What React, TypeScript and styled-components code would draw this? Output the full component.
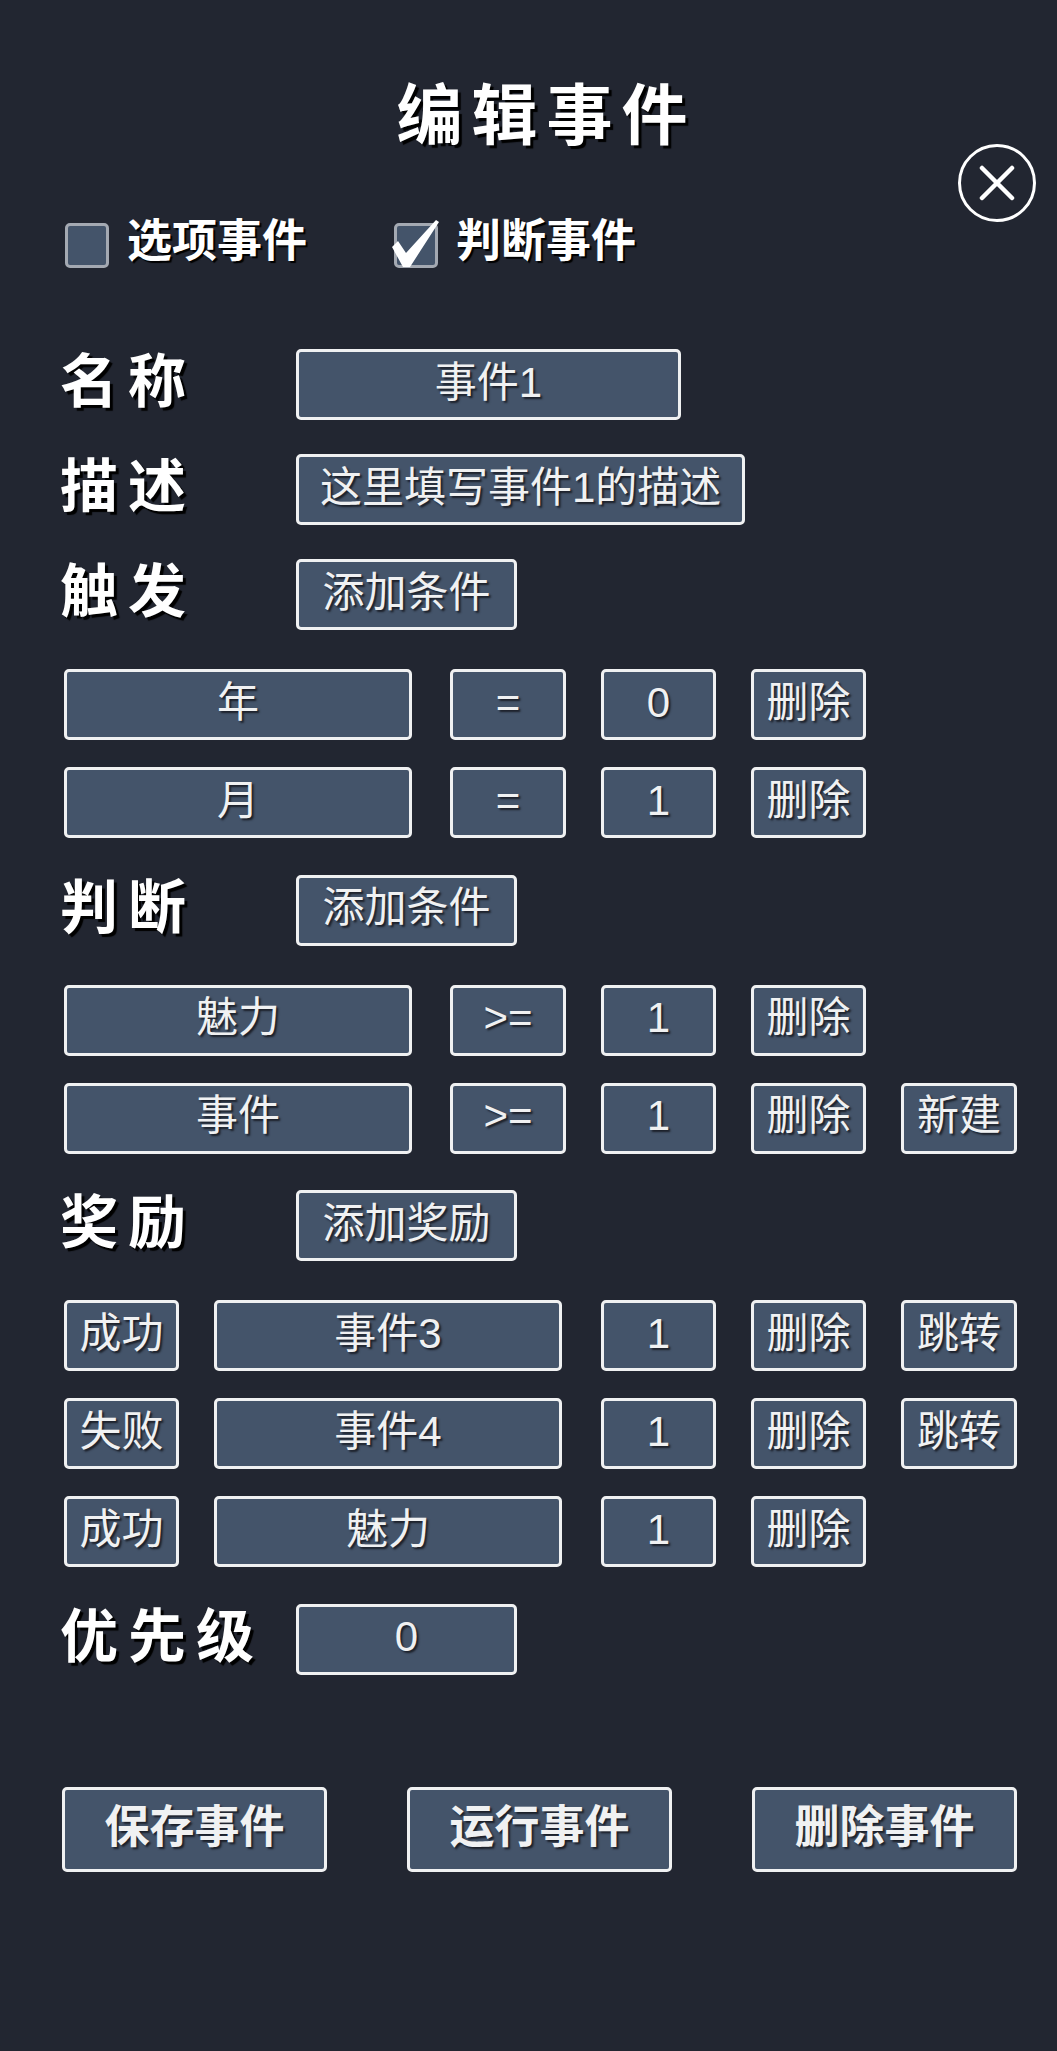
import styled, { createGlobalStyle } from "styled-components";

const GlobalStyle = createGlobalStyle`
  html, body {
    margin: 0;
    padding: 0;
    background: #222631;
  }
  * {
    box-sizing: border-box;
  }
`;

const FONT = `"Liberation Sans", "Noto Sans CJK SC", sans-serif`;

const Page = styled.div`
  width: 1057px;
  height: 2051px;
  padding: 0 21px 0 64px;
  font-family: ${FONT};
  color: #fff;
  overflow: hidden;
`;

const Title = styled.h1`
  width: 1057px;
  height: 144px;
  margin: 0 0 0 -64px;
  padding: 77px 0 0 36px;
  font-size: 66px;
  line-height: 78px;
  font-weight: 700;
  letter-spacing: 9px;
  text-align: center;
  text-shadow: 3px 3px 1px #000;
  white-space: nowrap;
`;

const TopBar = styled.div`
  display: flex;
  align-items: flex-start;
  height: 124px;
`;

const CheckGroup = styled.label<{ $width: number }>`
  align-self: flex-end;
  display: flex;
  align-items: center;
  gap: 18px;
  padding-left: 1px;
  width: ${(p) => p.$width}px;
  font-size: 45px;
  font-weight: 700;
  line-height: 45px;
  text-shadow: 2px 2px 1px #000;
`;

const CheckText = styled.span`
  margin-top: -9px;
`;

const CheckBox = styled.span`
  position: relative;
  flex: none;
  width: 44px;
  height: 45px;
  background: #44546a;
  border: 3px solid #a4a9b2;
  border-radius: 5px;
`;

const CheckMark = styled.svg`
  position: absolute;
  left: -5px;
  top: -6px;
  width: 50px;
  height: 50px;
`;

const CloseButton = styled.button`
  margin-left: auto;
  width: 78px;
  height: 78px;
  padding: 0;
  display: flex;
  align-items: center;
  justify-content: center;
  background: transparent;
  border: 3px solid #fff;
  border-radius: 50%;
`;

const Form = styled.div`
  margin-top: 81px;
  display: flex;
  flex-direction: column;
  gap: 36.5px;
`;

const TopFields = styled.div`
  display: flex;
  flex-direction: column;
  gap: 34px;
`;

const Section = styled.section`
  display: flex;
  flex-direction: column;
  gap: 39px;
`;

const FieldRow = styled.div`
  display: flex;
  align-items: center;
  margin-left: -3px;
`;

const Label = styled.div`
  width: 236px;
  height: 71px;
  flex: none;
  margin-left: -1px;
  font-size: 58px;
  font-weight: 700;
  line-height: 65px;
  letter-spacing: 10px;
  text-shadow: 3px 3px 1px #000;
  white-space: nowrap;
`;

const Box = styled.div<{ $width?: number; $span?: number }>`
  height: 71px;
  padding: 0 21px 4px;
  display: flex;
  align-items: center;
  justify-content: center;
  font-size: 42px;
  line-height: 50px;
  color: #f0f1f2;
  white-space: nowrap;
  background: #44546a;
  border: 3px solid #f0f1f2;
  border-radius: 5px;
  text-shadow: 2px 2px 2px #1b1f28;
  width: ${(p) => (p.$width ? `${p.$width}px` : "auto")};
  grid-column: ${(p) => (p.$span ? `span ${p.$span}` : "auto")};
`;

const Rows = styled.div`
  display: flex;
  flex-direction: column;
  gap: 27px;
`;

const Row = styled.div`
  display: grid;
  grid-template-columns: 115px 201px 116px 115px 115px 116px;
  column-gap: 35px;
`;

const Actions = styled.div`
  margin: 112px 0 0 -2px;
  width: 955px;
  display: flex;
  justify-content: space-between;
`;

const ActionButton = styled(Box)`
  width: 265px;
  height: 85px;
  font-size: 45px;
  font-weight: 700;
  padding-bottom: 3px;
`;

const Check = () => (
  <CheckMark viewBox="0 0 50 50">
    <path d="M0 27 L6 21 L14 33 L44 0 L47 2 L18 47 L11 47 Z" fill="#fff" />
  </CheckMark>
);

const WIDE = 348;

function ConditionRow({ name, op, value, extra }: { name: string; op: string; value: string; extra?: string }) {
  return (
    <Row>
      <Box $span={2} $width={WIDE}>{name}</Box>
      <Box>{op}</Box>
      <Box>{value}</Box>
      <Box>删除</Box>
      {extra && <Box>{extra}</Box>}
    </Row>
  );
}

function RewardRow({ result, name, extra }: { result: string; name: string; extra?: string }) {
  return (
    <Row>
      <Box>{result}</Box>
      <Box $span={2} $width={WIDE}>{name}</Box>
      <Box>1</Box>
      <Box>删除</Box>
      {extra && <Box>{extra}</Box>}
    </Row>
  );
}

export default function App() {
  return (
    <Page>
      <GlobalStyle />
      <Title>编辑事件</Title>
      <TopBar>
        <CheckGroup $width={329}>
          <CheckBox />
          <CheckText>选项事件</CheckText>
        </CheckGroup>
        <CheckGroup $width={290}>
          <CheckBox>
            <Check />
          </CheckBox>
          <CheckText>判断事件</CheckText>
        </CheckGroup>
        <CloseButton aria-label="关闭">
          <svg width="36" height="36" viewBox="0 0 36 36">
            <path d="M3 3 L33 33 M33 3 L3 33" stroke="#fff" strokeWidth="4.5" strokeLinecap="round" />
          </svg>
        </CloseButton>
      </TopBar>
      <Form>
        <TopFields>
          <FieldRow>
            <Label>名称</Label>
            <Box $width={385}>事件1</Box>
          </FieldRow>
          <FieldRow>
            <Label>描述</Label>
            <Box>这里填写事件1的描述</Box>
          </FieldRow>
          <Section>
            <FieldRow>
              <Label>触发</Label>
              <Box $width={221}>添加条件</Box>
            </FieldRow>
            <Rows>
              <ConditionRow name="年" op="=" value="0" />
              <ConditionRow name="月" op="=" value="1" />
            </Rows>
          </Section>
        </TopFields>
        <Section>
          <FieldRow>
            <Label>判断</Label>
            <Box $width={221}>添加条件</Box>
          </FieldRow>
          <Rows>
            <ConditionRow name="魅力" op=">=" value="1" />
            <ConditionRow name="事件" op=">=" value="1" extra="新建" />
          </Rows>
        </Section>
        <Section>
          <FieldRow>
            <Label>奖励</Label>
            <Box $width={221}>添加奖励</Box>
          </FieldRow>
          <Rows>
            <RewardRow result="成功" name="事件3" extra="跳转" />
            <RewardRow result="失败" name="事件4" extra="跳转" />
            <RewardRow result="成功" name="魅力" />
          </Rows>
        </Section>
        <FieldRow>
          <Label>优先级</Label>
          <Box $width={221}>0</Box>
        </FieldRow>
      </Form>
      <Actions>
        <ActionButton>保存事件</ActionButton>
        <ActionButton>运行事件</ActionButton>
        <ActionButton>删除事件</ActionButton>
      </Actions>
    </Page>
  );
}
